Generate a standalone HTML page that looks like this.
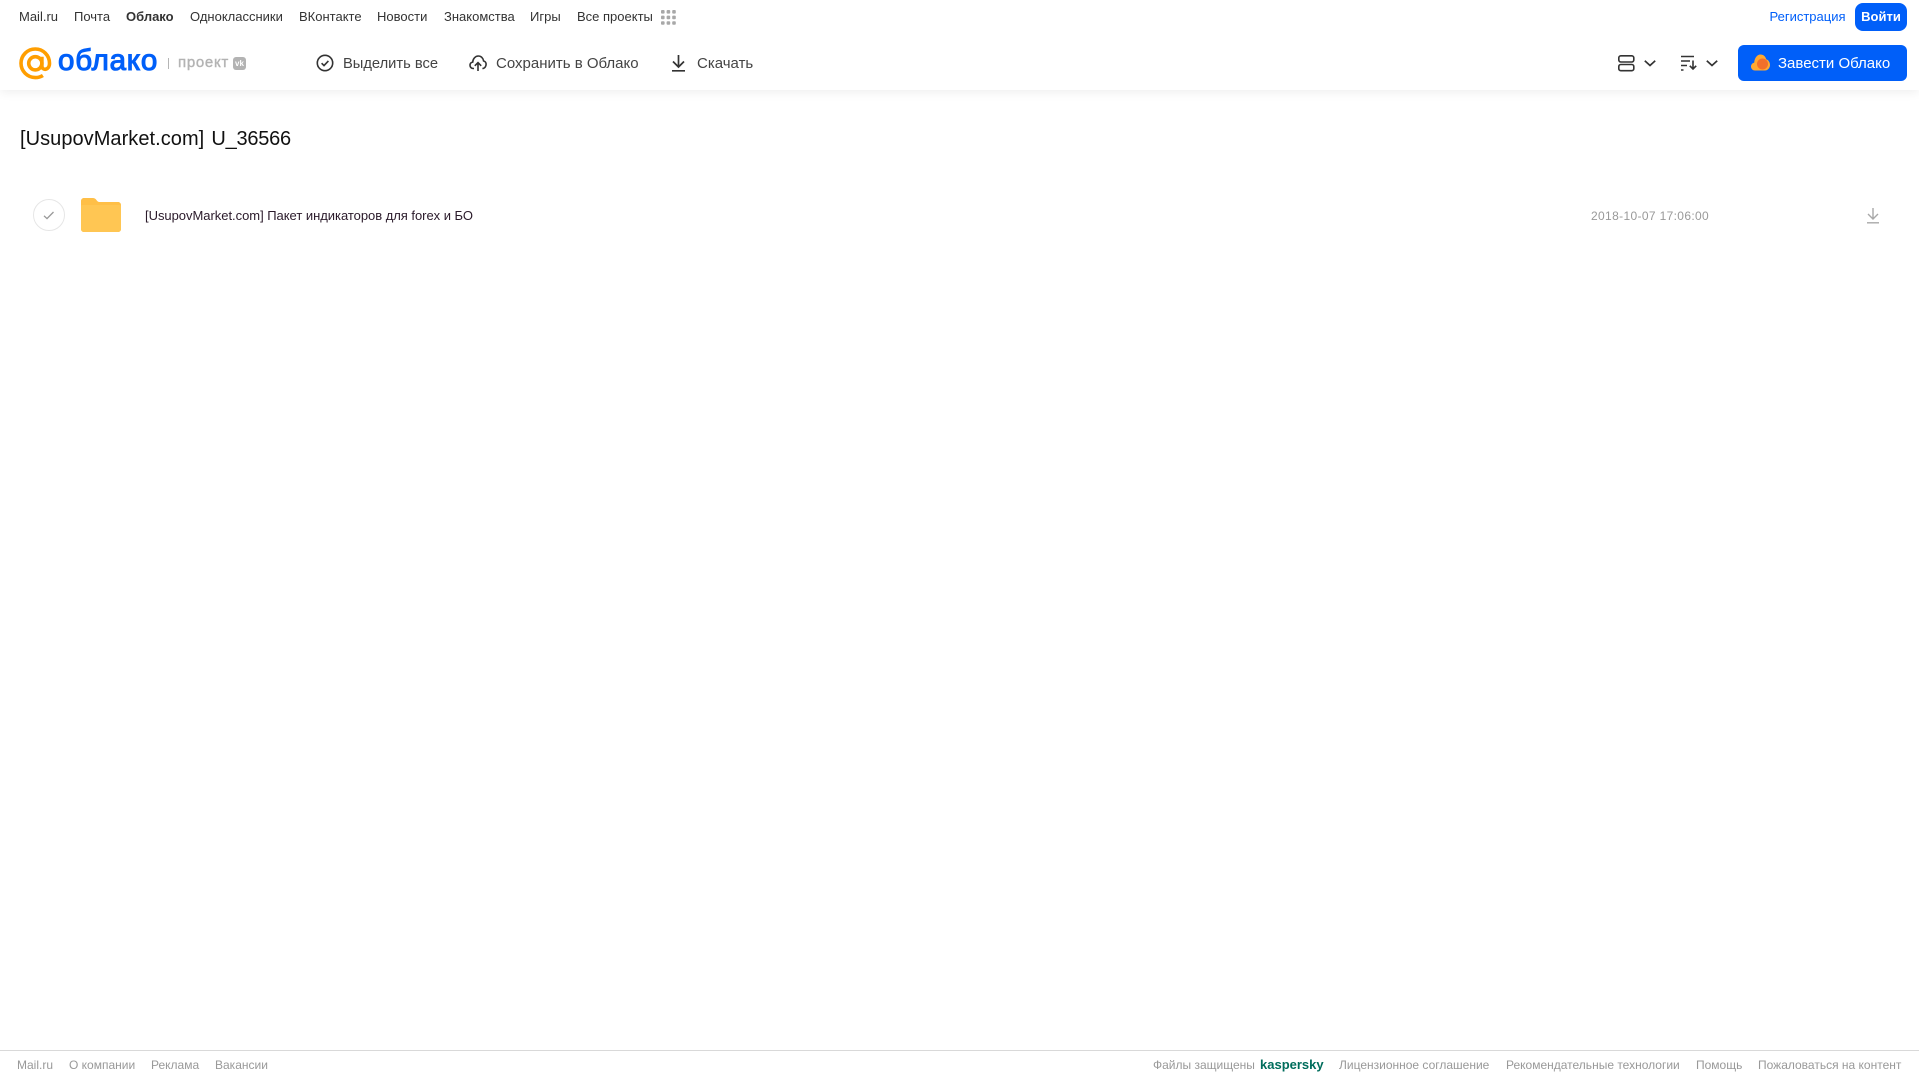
<!DOCTYPE html>
<html lang="ru"><head><meta charset="utf-8"><title>Облако</title>
<style>
html,body{margin:0;padding:0;background:#fff;}
body{width:1919px;height:1079px;position:relative;overflow:hidden;font-family:"Liberation Sans",Arial,sans-serif;}
.t{position:absolute;white-space:nowrap;line-height:20px;height:20px;}
.n{font-size:13px;color:#333;top:7px;}
.a{font-size:15px;color:#444;top:53.500px;}
.f{font-size:12px;color:#999;top:1055px;}
svg{position:absolute;overflow:visible;}
</style></head><body>
<div style="position:absolute;left:0;top:0;width:1919px;height:90px;background:#fff;box-shadow:0 2px 10px rgba(0,0,0,.07);"></div>

<span class="t n" style="left:19px">Mail.ru</span>
<span class="t n" style="left:74px">Почта</span>
<span class="t n" style="left:126px;font-weight:bold">Облако</span>
<span class="t n" style="left:190px">Одноклассники</span>
<span class="t n" style="left:299px">ВКонтакте</span>
<span class="t n" style="left:377px">Новости</span>
<span class="t n" style="left:444px">Знакомства</span>
<span class="t n" style="left:530px">Игры</span>
<span class="t n" style="left:577px">Все проекты</span>
<svg style="left:661px;top:10px" width="15" height="15" fill="#a8a8a8">
<rect x="0" y="0" width="3.6" height="3.6" rx="1"/><rect x="5.6" y="0" width="3.6" height="3.6" rx="1"/><rect x="11.2" y="0" width="3.6" height="3.6" rx="1"/>
<rect x="0" y="5.6" width="3.6" height="3.6" rx="1"/><rect x="5.6" y="5.6" width="3.6" height="3.6" rx="1"/><rect x="11.2" y="5.6" width="3.6" height="3.6" rx="1"/>
<rect x="0" y="11.2" width="3.6" height="3.6" rx="1"/><rect x="5.6" y="11.2" width="3.6" height="3.6" rx="1"/><rect x="11.2" y="11.2" width="3.6" height="3.6" rx="1"/>
</svg>

<svg style="left:19px;top:47px" width="33" height="33" viewBox="0 0 33 33" fill="none" stroke="#ff9e00" stroke-width="3.6">
<circle cx="16.3" cy="16.3" r="6.6"/>
<path d="M22.9 9.7v9.3c0 4.8 7.6 4.6 7.6-2.7C30.500 8.400 24.200 2 16.300 2S2 8.400 2 16.300 8.400 30.600 16.300 30.600c3 0 5.400-.7 7.600-2.100"/>
</svg>
<span class="t" style="left:58px;top:45px;height:32px;line-height:32px;font-size:29.500px;font-weight:normal;-webkit-text-stroke:1.100px #005ff9;color:#005ff9;letter-spacing:.8px">облако</span>
<div style="position:absolute;left:168px;top:58px;width:1px;height:11px;background:#b5b5b5"></div>
<span class="t" style="left:178px;top:53px;font-size:15px;font-weight:normal;-webkit-text-stroke:.4px #b3b3b3;color:#b3b3b3;letter-spacing:.7px">проект</span>
<div style="position:absolute;left:233px;top:57px;width:13px;height:13px;border-radius:3px;background:#b3b3b3;color:#fff;font-size:8px;font-weight:bold;line-height:13px;text-align:center">vk</div>

<svg style="left:316px;top:54px" width="18" height="18" viewBox="0 0 18 18" fill="none" stroke="#333" stroke-width="1.6"><circle cx="9" cy="9" r="7.7"/><path d="M5.600 9.200l2.400 2.400 4.400-4.700"/></svg>
<span class="t a" style="left:343px;font-size:14.700px">Выделить все</span>
<svg style="left:469px;top:54px" width="18" height="18" viewBox="0 0 18 18" fill="none" stroke="#333" stroke-width="1.6"><path d="M5 14.500H4.200C2.300 14.500 1 13 1 11.300c0-1.600 1.100-2.900 2.700-3.200C3.900 4.900 6.200 2 9.300 2c2.800 0 4.900 2.100 5.300 5 1.500.3 2.500 1.700 2.500 3.300 0 2.200-1.500 4.200-3.700 4.200"/><path d="M9 17V9M5.800 11.800L9 8.600l3.200 3.200"/></svg>
<span class="t a" style="left:496px">Сохранить в Облако</span>
<svg style="left:671px;top:54px" width="15" height="18" viewBox="0 0 15 18" fill="none" stroke="#333" stroke-width="1.700"><path d="M7.500 1v11.500M2 7.500l5.500 5.500L13 7.500M1 16.800h13"/></svg>
<span class="t a" style="left:697px">Скачать</span>

<span class="t" style="left:1769.500px;top:7px;font-size:13px;color:#005ff9">Регистрация</span>
<div style="position:absolute;left:1855px;top:3px;width:52px;height:28px;border-radius:8px;background:#005ff9;color:#fff;font-size:13px;font-weight:bold;line-height:28px;text-align:center">Войти</div>

<svg style="left:1618px;top:55px" width="17" height="17" viewBox="0 0 17 17" fill="none" stroke="#333" stroke-width="1.6"><rect x=".8" y=".8" width="15" height="6.200" rx="2"/><rect x=".8" y="9.500" width="15" height="6.200" rx="2"/></svg>
<svg style="left:1644px;top:60px" width="12" height="7" viewBox="0 0 12 7" fill="none" stroke="#333" stroke-width="1.700"><path d="M.8.800L6 5.500 11.200.8"/></svg>
<svg style="left:1681px;top:55px" width="17" height="16" viewBox="0 0 17 16" fill="none" stroke="#333" stroke-width="1.400"><path d="M0 1.500h13M0 6h9M0 10.500h6M0 15h2.500"/><path d="M12 5.500V14M8.800 10.800L12 14l3.200-3.200" stroke-width="1.600"/></svg>
<svg style="left:1706px;top:60px" width="12" height="7" viewBox="0 0 12 7" fill="none" stroke="#333" stroke-width="1.700"><path d="M.8.800L6 5.500 11.200.8"/></svg>

<div style="position:absolute;left:1738px;top:45px;width:169px;height:36px;border-radius:6px;background:#005ff9"></div>
<svg style="left:1751px;top:54px" width="19" height="17" viewBox="0 0 19 17"><path d="M4 16.500C1.800 16.500 0 14.800 0 12.500c0-2 1.400-3.500 3.200-3.900C3.600 4 6 .5 9.500.5c3 0 5 2 5.700 4.800 2.200.7 3.800 3 3.800 5.700 0 3-2.300 5.500-5 5.500z" fill="#ffa930"/><circle cx="11.500" cy="10" r="5.500" fill="#f2702a"/></svg>
<span class="t" style="left:1778px;top:53.500px;font-size:15px;color:#fff">Завести Облако</span>

<span class="t" style="left:20px;top:127px;height:24px;line-height:24px;font-size:20px;color:#111;letter-spacing:.05px;word-spacing:1.500px">[UsupovMarket.com] <span style="letter-spacing:-.25px">U_36566</span></span>

<div style="position:absolute;left:33px;top:199px;width:30px;height:30px;border:1px solid #e6e6e6;border-radius:50%"></div>
<svg style="left:43px;top:211px" width="12" height="9" viewBox="0 0 12 9" fill="none" stroke="#999" stroke-width="1.300"><path d="M1 4.800l3 2.800L10.500 1"/></svg>
<svg style="left:81px;top:198px" width="40" height="34" viewBox="0 0 41 34" preserveAspectRatio="none"><path d="M3 0h9c2 0 3 .8 4 2.200 1 1.300 1.800 1.800 3.500 1.800H38c1.700 0 3 1.300 3 3v24c0 1.700-1.300 3-3 3H3c-1.700 0-3-1.300-3-3V3C0 1.300 1.300 0 3 0z" fill="#ffbf47"/><path d="M0 8.200C0 7 1 7 3 7h35c2 0 3 0 3 1.200V31c0 1.700-1.300 3-3 3H3c-1.700 0-3-1.300-3-3z" fill="#ffc653"/></svg>
<span class="t" style="left:145px;top:206px;font-size:13px;color:#2a1a2a;letter-spacing:-.03px">[UsupovMarket.com] Пакет индикаторов для forex и БО</span>
<span class="t" style="left:1591px;top:206px;font-size:12px;color:#999;letter-spacing:.35px">2018-10-07 17:06:00</span>
<svg style="left:1866px;top:207px" width="14" height="17" viewBox="0 0 14 17" fill="none" stroke="#a8a8a8" stroke-width="1.400"><path d="M7 1v10.500M2 7l5 5 5-5M1 15.800h12"/></svg>

<div style="position:absolute;left:0;top:1050px;width:1919px;height:1px;background:#d9d9d9"></div>
<span class="t f" style="left:17px">Mail.ru</span>
<span class="t f" style="left:69px">О компании</span>
<span class="t f" style="left:151px">Реклама</span>
<span class="t f" style="left:215px">Вакансии</span>
<span class="t f" style="left:1153px">Файлы защищены</span>
<span class="t" style="left:1260px;top:1055px;font-size:13px;font-weight:bold;color:#006d5c">kaspersky</span>
<span class="t f" style="left:1339px">Лицензионное соглашение</span>
<span class="t f" style="left:1506px">Рекомендательные технологии</span>
<span class="t f" style="left:1696px">Помощь</span>
<span class="t f" style="left:1758px">Пожаловаться на контент</span>
</body></html>
